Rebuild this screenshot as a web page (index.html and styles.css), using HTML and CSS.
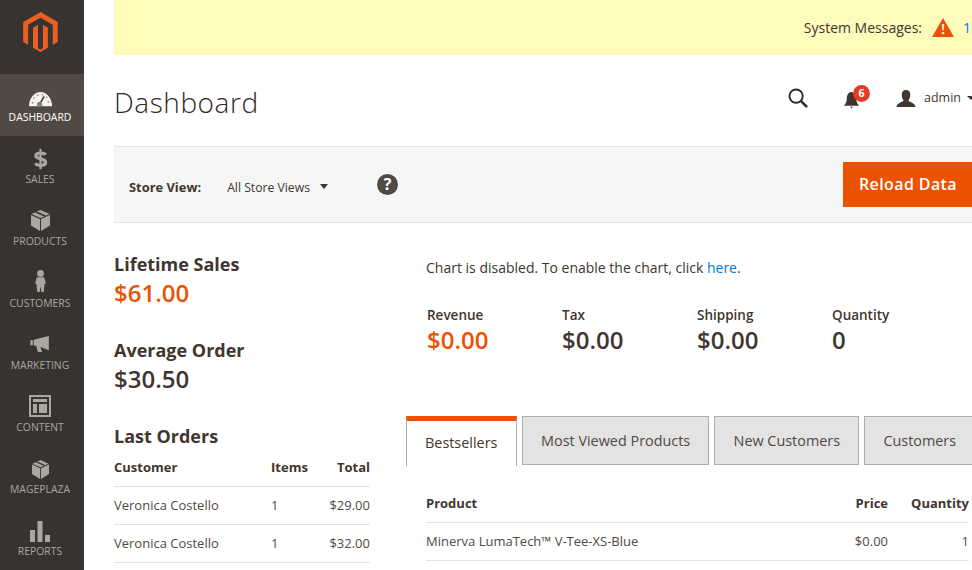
FILE: index.html
```html
<!DOCTYPE html>
<html lang="en">
<head>
<meta charset="utf-8">
<title>Dashboard</title>
<link rel="stylesheet" href="styles.css">
</head>
<body>
<div class="app">
  <nav class="sidebar">
    <div class="logo">
      <svg width="35" height="40" viewBox="0 0 41 47.300"><path fill="#eb5f23" d="M20.500 0 0 11.800V35.400L5.900 38.800V15.200L20.500 6.800 35 15.200V38.800L40.900 35.400V11.800Z"/><path fill="#eb5f23" d="M23.400 15.200V42.900L20.500 44.600 17.500 42.900V15.200L11.700 18.600V42.200L20.500 47.300 29.200 42.200V18.600Z"/></svg>
    </div>
    <a class="nav-item active">
      <svg width="23" height="16" viewBox="0 0 26 18"><path fill="#f7f3eb" d="M0 17C0 8 6 1 13 1S26 8 26 17Z"/><path stroke="#514943" stroke-width="2" d="M12 15 17 6"/><circle cx="12" cy="15" r="3" fill="#8a8178"/><path stroke="#7a7a7a" stroke-width="1.500" stroke-dasharray="1.500 4" fill="none" d="M4 14C4 8 8 4 13 4S22 8 22 14"/><path stroke="#5d7fa3" stroke-width="1" d="M0 17.500H26"/></svg>
      <span>DASHBOARD</span>
    </a>
    <a class="nav-item">
      <svg class="icon-sales" width="13" height="22" viewBox="0 0 14 22"><path fill="none" stroke="#aaa6a0" stroke-width="3.600" d="M12.500 6.500C11 4.500 2 3.500 2 7.500S12.500 10 12.500 14.500 3 18.500 1.500 15.500"/><path stroke="#aaa6a0" stroke-width="2.400" d="M7 0V22"/></svg>
      <span>SALES</span>
    </a>
    <a class="nav-item">
      <svg width="19" height="21" viewBox="0 0 19 21"><path fill="#aaa6a0" d="M9 9 0 5V15.500L9 21ZM10 9V21L19 15.500V5ZM.5 4 9.500 0 18.500 4 9.500 8Z"/><path stroke="#373330" stroke-width="1.500" d="M5 2 14 6"/></svg>
      <span>PRODUCTS</span>
    </a>
    <a class="nav-item">
      <svg width="11" height="24" viewBox="0 0 12 24"><circle cx="6" cy="3.700" r="3.700" fill="#aaa6a0"/><path fill="#aaa6a0" d="M2 8H10L12 15H10.500L9.500 24H7L6 18 5 24H2.500L1.500 15H0Z"/></svg>
      <span>CUSTOMERS</span>
    </a>
    <a class="nav-item">
      <svg class="icon-marketing" width="22" height="16" viewBox="0 0 23 19"><path fill="#aaa6a0" d="M0 5H3V11H0ZM4 4.500 22 0V17L12 13 14 19H9L7 12 4 11Z"/></svg>
      <span>MARKETING</span>
    </a>
    <a class="nav-item">
      <svg width="22" height="22" viewBox="0 0 22 22"><path fill="#aaa6a0" d="M0 0H22V22H0ZM2 2V20H20V2ZM4 4H18V7H4ZM4 9H8V18H4ZM10 9H18V18H10Z" fill-rule="evenodd"/></svg>
      <span>CONTENT</span>
    </a>
    <a class="nav-item">
      <svg width="17" height="19" viewBox="0 0 19 21"><path fill="#aaa6a0" d="M9 9 0 5V15.500L9 21ZM10 9V21L19 15.500V5ZM.5 4 9.500 0 18.500 4 9.500 8Z"/><path stroke="#373330" stroke-width="1.500" d="M5 2 14 6"/></svg>
      <span>MAGEPLAZA</span>
    </a>
    <a class="nav-item">
      <svg class="icon-sales" width="20" height="21" viewBox="0 0 20 21"><path fill="#aaa6a0" d="M0 9H5V21H0ZM7.500 0H12.500V21H7.500ZM15 14H20V21H15Z"/></svg>
      <span>REPORTS</span>
    </a>
  </nav>

  <main class="main">
    <div class="notice">
      <span class="notice-label">System Messages:</span>
      <svg class="notice-icon" width="22" height="19" viewBox="0 0 22 19"><path fill="#eb5202" d="M11 0 22 19H0Z"/><path fill="#fbe3c4" d="M9.800 6H12.200L11.800 12.500H10.200ZM9.800 14H12.200V16.300H9.800Z"/></svg>
      <a class="notice-count">1</a>
    </div>

    <header class="page-header">
      <h1 class="title">Dashboard</h1>
      <div class="actions">
        <svg class="search" width="20" height="20" viewBox="0 0 21 21"><circle cx="8.500" cy="8.500" r="7" fill="none" stroke="#2f2a26" stroke-width="2"/><path stroke="#2f2a26" stroke-width="2.600" d="M13.500 13.500 20 20"/></svg>
        <div class="bell">
          <svg class="bell-icon" width="17" height="17" viewBox="0 0 16 18"><path fill="#41362f" d="M8 0C11 0 13 3 13 7 13 11 14.500 12.500 16 14.500H0C1.500 12.500 3 11 3 7 3 3 5 0 8 0ZM6.500 15.500H9.500L8 17.500Z"/></svg>
          <span class="badge">6</span>
        </div>
        <div class="user">
          <svg class="user-icon" width="20" height="17" viewBox="0 0 20 18"><path fill="#41362f" d="M10 0C13 0 14.500 2 14.500 5S13.500 10 12.500 11C14 13 20 13.500 20 18H0C0 13.500 6 13 7.500 11 6.500 10 5.500 8 5.500 5S7 0 10 0Z"/></svg>
          <span class="user-name">admin</span>
          <span class="caret small"></span>
        </div>
      </div>
    </header>

    <div class="store-bar">
      <span class="store-label">Store View:</span>
      <span class="store-value">All Store Views</span>
      <span class="caret"></span>
      <span class="help">?</span>
      <button class="reload">Reload Data</button>
    </div>

    <div class="columns">
      <section class="left">
        <div class="stat">
          <h2 class="stat-title">Lifetime Sales</h2>
          <div class="stat-value accent">$61.00</div>
        </div>
        <div class="stat">
          <h2 class="stat-title">Average Order</h2>
          <div class="stat-value">$30.50</div>
        </div>
        <h2 class="stat-title orders-title">Last Orders</h2>
        <table class="orders">
          <thead><tr><th>Customer</th><th class="items">Items</th><th class="num">Total</th></tr></thead>
          <tbody>
            <tr><td>Veronica Costello</td><td class="items">1</td><td class="num">$29.00</td></tr>
            <tr><td>Veronica Costello</td><td class="items">1</td><td class="num">$32.00</td></tr>
          </tbody>
        </table>
      </section>

      <section class="right">
        <p class="chart-note">Chart is disabled. To enable the chart, click <a class="link">here</a>.</p>
        <div class="totals">
          <div class="total"><div class="total-label">Revenue</div><div class="total-value accent">$0.00</div></div>
          <div class="total"><div class="total-label">Tax</div><div class="total-value">$0.00</div></div>
          <div class="total"><div class="total-label">Shipping</div><div class="total-value">$0.00</div></div>
          <div class="total"><div class="total-label">Quantity</div><div class="total-value">0</div></div>
        </div>
        <div class="tabs">
          <a class="tab active">Bestsellers</a>
          <a class="tab">Most Viewed Products</a>
          <a class="tab">New Customers</a>
          <a class="tab">Customers</a>
        </div>
        <table class="products">
          <thead><tr><th>Product</th><th class="price">Price</th><th class="qty">Quantity</th></tr></thead>
          <tbody><tr><td>Minerva LumaTech™ V-Tee-XS-Blue</td><td class="price">$0.00</td><td class="qty">1</td></tr></tbody>
        </table>
      </section>
    </div>
  </main>
</div>
</body>
</html>
```

FILE: styles.css
```css
html, body {
  margin: 0;
  padding: 0;
  height: 570px;
  overflow: hidden;
  background: #fff;
}
body {
  font-family: "Open Sans", sans-serif;
  font-size: 14px;
  color: #41362f;
}
.app {
  display: flex;
  width: 972px;
  height: 570px;
  overflow: hidden;
}
.sidebar {
  flex: 0 0 84px;
  background: #373330;
  display: flex;
  flex-direction: column;
}
.logo {
  height: 74px;
  padding: 12px 3px 0 0;
  box-sizing: border-box;
  display: flex;
  justify-content: center;
}
.nav-item {
  height: 62px;
  box-sizing: border-box;
  padding: 0 4px 12px 0;
  display: flex;
  flex-direction: column;
  align-items: center;
  justify-content: flex-end;
  gap: 3px;
  color: #aaa6a0;
  font-size: 10.400px;
  line-height: 14px;
}
.nav-item.active {
  background: #514943;
  color: #fff;
}
.icon-sales {
  margin-bottom: -1px;
}
.icon-marketing {
  margin-bottom: 3px;
}
.main {
  flex: 0 0 888px;
  box-sizing: border-box;
  padding-left: 30px;
  overflow: hidden;
}
.notice {
  height: 55px;
  background: #fffbbb;
  display: flex;
  align-items: center;
  justify-content: flex-end;
  padding-bottom: 1px;
  box-sizing: border-box;
}
.notice-label {
  font-size: 14px;
}
.notice-icon {
  margin-left: 10px;
}
.notice-count {
  color: #007bdb;
  margin-left: 9px;
  width: 9px;
  overflow: hidden;
}
.page-header {
  height: 91px;
  display: flex;
  align-items: center;
}
.title {
  margin: 0;
  font-size: 28px;
  font-weight: 300;
  line-height: 36px;
  color: #2f2a26;
  letter-spacing: .55px;
  flex: 1;
  padding-top: 3px;
}
.actions {
  display: flex;
  align-items: center;
  padding-bottom: 5px;
}
.search {
  margin-right: 35px;
}
.bell {
  position: relative;
  margin-right: 36px;
  width: 17px;
  height: 17px;
}
.bell-icon {
  display: block;
  position: relative;
  top: 2px;
}
.badge {
  position: absolute;
  left: 10px;
  top: -5px;
  width: 17px;
  height: 17px;
  border-radius: 50%;
  background: #e33b24;
  color: #fff;
  font-size: 10.500px;
  font-weight: 700;
  line-height: 17px;
  text-align: center;
}
.user {
  display: flex;
  align-items: center;
  width: 76px;
  flex: none;
}
.user-icon {
  flex: none;
}
.user-name {
  flex: none;
  margin: 0 0 2px 8px;
  font-size: 12.500px;
}
.caret {
  flex: none;
  width: 0;
  height: 0;
  border-style: solid;
  border-width: 5px 4.500px 0;
  border-color: #41362f transparent transparent;
  margin-left: 10px;
}
.caret.small {
  margin-left: 6px;
  border-width: 4px 4px 0;
}
.store-bar {
  height: 77px;
  box-sizing: border-box;
  background: #f5f7f7;
  border-top: 1px solid #e3e3e3;
  border-bottom: 1px solid #e3e3e3;
  display: flex;
  align-items: center;
  padding-left: 15px;
}
.store-label {
  font-size: 12.900px;
  font-weight: 700;
  margin-right: 26px;
  padding-top: 4px;
}
.store-value {
  font-size: 12.200px;
  padding-top: 6px;
}
.store-bar .caret {
  margin-top: 4px;
}
.help {
  width: 21px;
  height: 21px;
  border-radius: 50%;
  background: #514943;
  color: #fff;
  font-size: 16px;
  font-weight: 700;
  line-height: 21px;
  text-align: center;
  margin-left: 49px;
}
.reload {
  margin-left: auto;
  width: 129px;
  height: 45px;
  border: 0;
  background: #eb5202;
  color: #fff;
  font-family: inherit;
  font-size: 16px;
  font-weight: 600;
  letter-spacing: .4px;
  padding: 0 0 2px 1px;
}
.columns {
  display: grid;
  grid-template-columns: 256px 1fr;
  column-gap: 36px;
}
.left {
  padding-top: 29px;
}
.stat {
  height: 86px;
}
.stat-title {
  margin: 0;
  font-size: 18px;
  line-height: 25px;
  font-weight: 700;
  color: #41362f;
}
.stat-value {
  font-size: 24px;
  line-height: 32px;
  font-weight: 600;
  color: #41362f;
}
.accent {
  color: #eb5202;
}
.orders-title {
  margin-bottom: 5px;
}
table {
  border-collapse: collapse;
  font-size: 13px;
  color: #514943;
}
th {
  font-weight: 700;
  text-align: left;
  font-size: 13px;
  color: #41362f;
  padding: 0;
  border-bottom: 1px solid #e3e3e3;
}
td {
  padding: 0;
  border-bottom: 1px solid #e3e3e3;
}
.orders {
  width: 256px;
}
.orders th {
  height: 32px;
  padding-bottom: 5px;
  box-sizing: border-box;
}
.orders td {
  height: 38px;
  box-sizing: border-box;
}
.orders .items {
  width: 37px;
}
.num {
  text-align: right;
  width: 62px;
}
.right {
  padding-top: 35px;
  min-width: 0;
}
.chart-note {
  margin: 0 0 0 20px;
  font-size: 14px;
  line-height: 20px;
}
.link {
  color: #007bdb;
}
.totals {
  display: flex;
  padding-left: 21px;
  margin-top: 28px;
}
.total {
  flex: 0 0 135px;
}
.total-label {
  font-size: 13.500px;
  font-weight: 600;
  line-height: 19px;
}
.total-value {
  font-size: 24px;
  font-weight: 600;
  line-height: 33px;
  margin-top: -2px;
}
.tabs {
  display: flex;
  margin-top: 60px;
  gap: 5px;
  height: 49px;
  box-sizing: border-box;
}
.tab {
  box-sizing: border-box;
  height: 49px;
  border: 1px solid #adadad;
  background: #e3e3e3;
  font-size: 14.400px;
  line-height: 47px;
  padding: 0 18.200px;
  color: #514943;
  white-space: nowrap;
}
.tab.active {
  background: #fff;
  border-top: 5px solid #eb5202;
  border-bottom: 0;
  line-height: 43px;
  padding: 0 18.500px 0 18px;
  color: #41362f;
  height: 50px;
}
.products {
  width: 543px;
  margin: 19px 0 0 20px;
}
.products th {
  height: 38px;
  box-sizing: border-box;
}
.products td {
  height: 38px;
  box-sizing: border-box;
}
.price {
  text-align: right;
  width: 60px;
}
.qty {
  text-align: right;
  width: 81px;
}
```
